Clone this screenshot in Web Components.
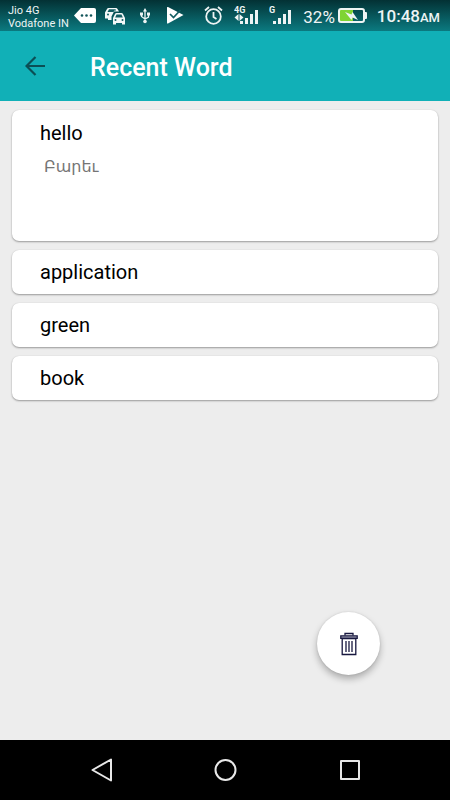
<!DOCTYPE html>
<html lang="en">
<head>
<meta charset="utf-8">
<meta name="viewport" content="width=device-width, initial-scale=1">
<title>Recent Word</title>
<style>
html, body { margin: 0; height: 100%; }
body { font-family: Roboto, "DejaVu Sans", sans-serif; background: #ededed; }
</style>
</head>
<body>
<word-screen>
  <status-bar slot="status"></status-bar>
  <app-bar slot="header">Recent Word</app-bar>
  <word-card expanded>hello<span slot="meaning" lang="hy">Բարեւ</span></word-card>
  <word-card>application</word-card>
  <word-card>green</word-card>
  <word-card>book</word-card>
  <delete-button slot="action"></delete-button>
  <nav-bar slot="nav"></nav-bar>
</word-screen>
<script>
const define = (name, html) => customElements.define(name, class extends HTMLElement {
  constructor() {
    super();
    this.attachShadow({ mode: "open" }).innerHTML = html;
  }
});

define("word-screen", `
<style>
:host { display: flex; flex-direction: column; min-height: 100vh; background: #ededed; }
main { position: relative; flex: 1; padding: 9px 12px; }
.list { display: flex; flex-direction: column; gap: 9px; }
slot[name="action"] { display: block; position: absolute; right: 70px; bottom: 65px; }
</style>
<slot name="status"></slot>
<slot name="header"></slot>
<main>
  <div class="list"><slot></slot></div>
  <slot name="action"></slot>
</main>
<slot name="nav"></slot>`);

define("status-bar", `
<style>
:host { display: flex; align-items: center; justify-content: space-between; height: 31px; padding: 0 10px 0 8px;
  box-sizing: border-box; color: #eef4f4; background: linear-gradient(#033134, #0b7a80); }
.group { display: flex; align-items: center; }
.carrier { font-size: 11px; line-height: 13px; white-space: nowrap; padding-top: 2px; }
.left { gap: 5px; }
svg { display: block; flex: none; }
.car { margin-left: 4px; }
.usb { margin-left: 8px; }
.play { margin-left: 12px; }
.right { gap: 10px; }
.power { gap: 3px; font-size: 17px; line-height: 20px; padding-top: 2px; }
.time { font-size: 17px; line-height: 20px; font-weight: 500; white-space: nowrap; padding-top: 2px; }
.time small { font-size: 13px; }
text { font: bold 9px Roboto, sans-serif; }
</style>
<div class="group left">
  <div class="carrier">Jio 4G<br>Vodafone IN</div>
  <svg width="22" height="17" viewBox="0 0 22 17" fill="#fff" aria-hidden="true"><path d="M7 1h13q2 0 2 2v11q0 2-2 2H7L0 8.500z"/><g fill="#12555a"><circle cx="8" cy="8.500" r="1.300"/><circle cx="12.500" cy="8.500" r="1.300"/><circle cx="17" cy="8.500" r="1.300"/></g></svg>
  <svg class="car" width="22" height="18" viewBox="0 0 22 18" aria-hidden="true"><g fill="#f4f8f8"><path d="M0 11V5.500L2 2q.5-1 1.500-1H11q1 0 1.500 1L14 4.500H9L6.500 9.500V13H3v-1.500H0z"/><path d="M8 11l2-4q.5-1 1.500-1h5q1 0 1.500 1l2 4v6.500h-3V16h-6v1.500H8z"/></g><g fill="#125d62"><path d="M4 2.300h6.500l.7 1.200H9.500L8.500 5H2.500zM11.500 7.500h5l1.300 3h-7.600z"/><circle cx="3" cy="7.500" r="1"/><circle cx="10.500" cy="13" r="1"/><circle cx="17.500" cy="13" r="1"/></g></svg>
  <svg class="usb" width="10" height="16" viewBox="0 0 10 16" fill="none" stroke="#eef4f4" stroke-width="1.300" aria-hidden="true"><path d="M5 3v10M1.500 6v2.500L5 11l3.500-2V6"/><path fill="#eef4f4" stroke="none" d="M5 0l2 3.500H3zM0 4.500h3v3H0zM7 4.500h3v3H7z"/><circle cx="5" cy="13.500" r="1.800" fill="#eef4f4" stroke="none"/></svg>
  <svg class="play" width="17" height="17" viewBox="0 0 17 17" aria-hidden="true"><path fill="#fff" d="M1 0L16.500 8 1 16.500Q0 17 0 15.500V1Q0-.5 1 0z"/><path d="M3 7l3.500 3.500L13.500 3" fill="none" stroke="#125d62" stroke-width="1.700"/></svg>
</div>
<div class="group right">
  <svg width="20" height="19" viewBox="0 0 20 19" fill="none" stroke="#eef4f4" stroke-width="1.800" aria-hidden="true"><circle cx="9.500" cy="10.500" r="7.300"/><path d="M9.500 6v5l3 2M1 4.500L5 1M18 4.500L14 1"/></svg>
  <svg width="25" height="20" viewBox="0 0 25 20" fill="#eef4f4"><text x="0" y="7">4G</text><path d="M4.500 8v7L.5 11.500zM5.500 8v7l4-3.500z"/><path d="M6 15h3v3H6zM11 12h3v6h-3zM16 8h3v10h-3zM21 4h3v14h-3z"/></svg>
  <svg width="24" height="20" viewBox="0 0 24 20" fill="#eef4f4"><text x="0" y="7">G</text><path d="M4 15h3v3H4zM9 12h3v6H9zM14 8h3v10h-3zM19 4h3v14h-3z"/></svg>
  <div class="group power"><span>32%</span>
    <svg width="29" height="18" viewBox="0 0 29 18" aria-hidden="true"><path fill="#7fd433" d="M2 2h13v12H2z"/><rect x="1" y="1" width="25" height="13" rx="2" fill="none" stroke="#eef4f4" stroke-width="2"/><path fill="#eef4f4" d="M26 4h2q1 0 1 1v5q0 1-1 1h-2zM7 4l6.500 2.500L14.500 4l5.500 8-5.500-2.500-1 2.500z"/></svg>
  </div>
  <div class="time">10:48<small>AM</small></div>
</div>`);

define("app-bar", `
<style>
:host { display: block; background: #11b0b7; color: #fff; }
header { display: flex; align-items: center; height: 70px; padding-left: 20px; gap: 40px; box-sizing: border-box; }
button { display: grid; place-items: center; width: 30px; height: 30px; padding: 0; border: 0; background: none; color: #0b4f55; }
h1 { margin: 0; padding-top: 4px; font-size: 25px; line-height: 32px; font-weight: 500; }
</style>
<header>
  <button type="button" aria-label="Back"><svg width="20" height="20" viewBox="0 0 20 20" fill="none" stroke="currentColor" stroke-width="2.200" aria-hidden="true"><path d="M20 10H1.500M10.500 1L1.500 10l9 9"/></svg></button>
  <h1><slot></slot></h1>
</header>`);

define("word-card", `
<style>
:host { display: block; box-sizing: border-box; min-height: 44px; padding: 10px 28px; border-radius: 7px; background: #fff;
  box-shadow: 0 1px 2px rgba(0,0,0,.35), 0 0 1px rgba(0,0,0,.12); color: #000; font-size: 20px; line-height: 24px; }
:host([expanded]) { min-height: 131px; padding-top: 11px; }
.meaning { padding: 10px 4px 0; color: #757575; font-size: 16px; line-height: 24px; }
:host(:not([expanded])) .meaning { display: none; }
</style>
<div><slot></slot></div>
<div class="meaning"><slot name="meaning"></slot></div>`);

define("delete-button", `
<style>
:host { display: block; }
button { display: grid; place-items: center; width: 63px; height: 63px; padding: 0; border: 0; border-radius: 50%; background: #fff;
  box-shadow: 0 4px 7px rgba(0,0,0,.28), 0 0 2px rgba(0,0,0,.12); }
</style>
<button type="button" aria-label="Delete all"><svg width="18" height="24" viewBox="0 0 18 24" fill="none" stroke="#17173f" stroke-width="1.300" aria-hidden="true"><path d="M5 3.500v-2h8v2"/><path d="M.8 3.800h16.400v2.500H.8z" fill="#aaaabd"/><path d="M2.200 6.500h13.600v16H2.200zM6 9v11M9 9v11M12 9v11"/></svg></button>`);

define("nav-bar", `
<style>
:host { display: block; background: #000; }
nav { display: grid; grid-template-columns: repeat(3, 1fr); height: 60px; padding: 0 39px; }
button { display: grid; place-items: center; padding: 0; border: 0; background: none; }
svg { fill: none; stroke: #e8e8e8; stroke-width: 2; stroke-linejoin: round; }
</style>
<nav aria-label="System">
  <button type="button" aria-label="Back"><svg width="24" height="24" viewBox="0 0 24 24"><path d="M3.500 12L22 1.500v21z"/></svg></button>
  <button type="button" aria-label="Home"><svg width="24" height="24" viewBox="0 0 24 24"><circle cx="12.500" cy="12" r="10"/></svg></button>
  <button type="button" aria-label="Overview"><svg width="24" height="24" viewBox="0 0 24 24"><path d="M4 3h18v18H4z"/></svg></button>
</nav>`);
</script>
</body>
</html>
